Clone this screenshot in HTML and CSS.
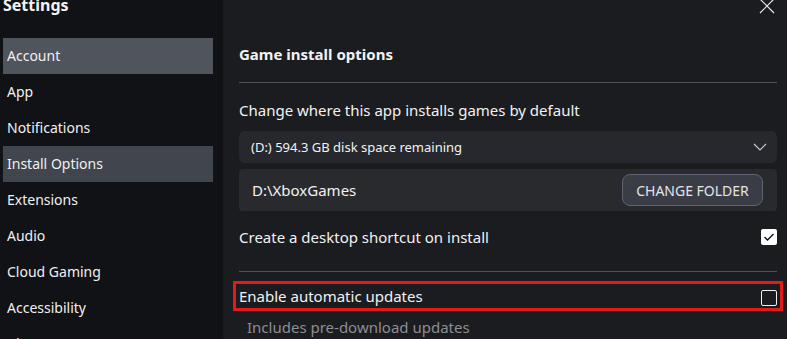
FILE: index.html
```html
<!DOCTYPE html>
<html>
<head>
<meta charset="utf-8">
<link rel="stylesheet" href="styles.css">
</head>
<body>
<div class="app">
  <aside class="sidebar">
    <div class="title">Settings</div>
    <nav class="menu">
      <div class="item hover">Account</div>
      <div class="item">App</div>
      <div class="item">Notifications</div>
      <div class="item active">Install Options</div>
      <div class="item">Extensions</div>
      <div class="item">Audio</div>
      <div class="item">Cloud Gaming</div>
      <div class="item">Accessibility</div>
      <div class="item">About</div>
    </nav>
  </aside>
  <main class="main">
    <svg class="close" width="16" height="16" viewBox="0 0 16 16"><path d="M1 1 L15 15 M15 1 L1 15" stroke="#e8e8e8" stroke-width="1.2" fill="none"/></svg>
    <h2 class="heading">Game install options</h2>
    <div class="sep first"></div>
    <div class="desc">Change where this app installs games by default</div>
    <div class="dropdown">
      <span>(D:) 594.3 GB disk space remaining</span>
      <svg width="14" height="8" viewBox="0 0 14 8"><path d="M1 1 L7 7 L13 1" stroke="#c9cacd" stroke-width="1.2" fill="none"/></svg>
    </div>
    <div class="folder">
      <span>D:\XboxGames</span>
      <button class="btn">CHANGE FOLDER</button>
    </div>
    <div class="row shortcut">
      <span>Create a desktop shortcut on install</span>
      <span class="check on"><svg width="12" height="10" viewBox="0 0 12 10"><path d="M1.5 5 L4.5 8 L10.5 2" stroke="#111" stroke-width="1.4" fill="none"/></svg></span>
    </div>
    <div class="sep"></div>
    <div class="row highlight">
      <span>Enable automatic updates</span>
      <span class="check off"></span>
    </div>
    <div class="note">Includes pre-download updates</div>
  </main>
</div>
</body>
</html>
```
FILE: styles.css
```css
html, body {
  margin: 0;
  padding: 0;
  background: #1b1c20;
  overflow: hidden;
}
body {
  font-family: "Noto Sans", "Open Sans", sans-serif;
  color: #f2f2f2;
  width: 787px;
  height: 339px;
}
.app {
  display: flex;
  height: 339px;
}
.sidebar {
  width: 223px;
  flex: none;
  background: #111216;
  padding-left: 3px;
  box-sizing: border-box;
}
.title {
  font-weight: 700;
  font-size: 16px;
  line-height: 20px;
  margin-top: -5px;
  margin-left: 0;
  height: 20px;
}
.menu {
  margin-top: 23px;
  width: 210px;
}
.item {
  height: 36px;
  line-height: 36px;
  padding-left: 4px;
  font-size: 14px;
  color: #f0f0f0;
}
.item.hover { background: #50545c; }
.item.active { background: #41454d; }

.main {
  position: relative;
  flex: 1;
  padding: 0 10px 0 16px;
  background: #1b1c20;
}
.close {
  position: absolute;
  right: 12px;
  top: -2px;
}
.heading {
  margin: 44px 0 0;
  font-size: 15px;
  font-weight: 700;
  line-height: 20px;
}
.sep {
  height: 1px;
  background: #505155;
  margin-top: 14px;
}
.sep.first { margin-top: 18px; }
.desc {
  margin-top: 17px;
  font-size: 15px;
  line-height: 20px;
}
.dropdown {
  margin-top: 11px;
  height: 32px;
  border-radius: 6px;
  background: #26282d;
  display: flex;
  align-items: center;
  justify-content: space-between;
  padding: 0 10px 0 12px;
  font-size: 13px;
}
.folder {
  margin-top: 6px;
  height: 42px;
  border-radius: 4px;
  background: #292a2e;
  display: flex;
  align-items: center;
  justify-content: space-between;
  padding: 0 14px 0 13px;
  font-size: 15px;
}
.btn {
  font-family: inherit;
  height: 32px;
  width: 141px;
  border-radius: 8px;
  border: 1px solid #5f6372;
  background: #3a3d46;
  color: #e4e4e6;
  font-size: 14px;
  padding: 0;
}
.row {
  display: flex;
  align-items: center;
  justify-content: space-between;
  font-size: 15px;
}
.shortcut {
  margin-top: 6px;
  height: 40px;
}
.check {
  width: 16px;
  height: 16px;
  box-sizing: border-box;
  border-radius: 2px;
  display: flex;
  align-items: center;
  justify-content: center;
}
.check.on { background: #ffffff; }
.check.off { border: 1px solid #f0f0f0; }
.highlight {
  margin: 9px -6px 0;
  height: 24px;
  border: 3px solid #e3191c;
  padding: 0 3px;
  align-items: flex-start;
  line-height: 24px;
}
.highlight .check { margin-top: 6px; }
.note {
  margin-top: 6px;
  padding-left: 8px;
  font-size: 15px;
  line-height: 20px;
  color: #8d8e92;
}
```
